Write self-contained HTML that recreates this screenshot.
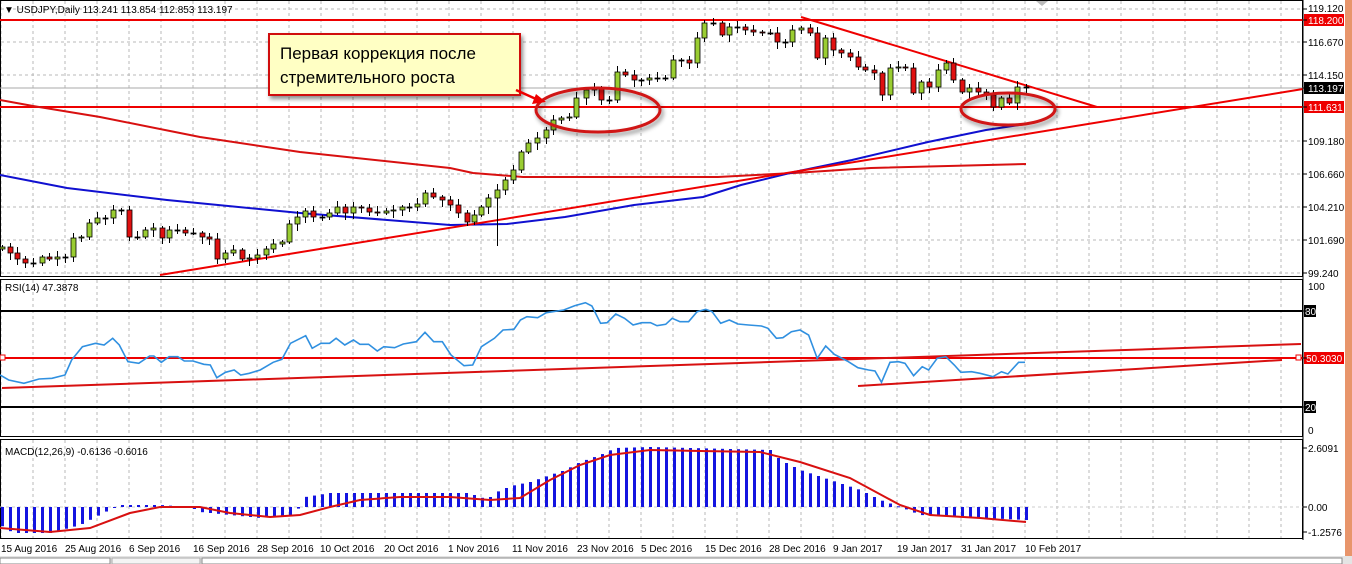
<!DOCTYPE html>
<html><head><meta charset="utf-8">
<style>
html,body{margin:0;padding:0;background:#fff;}
svg{display:block;font-family:"Liberation Sans",Arial,sans-serif;}
.ax{font-size:10px;fill:#000;}
</style></head>
<body>
<svg id="s" width="1352" height="564" viewBox="0 0 1352 564" xmlns="http://www.w3.org/2000/svg">
<defs>
<filter id="sh" x="-20%" y="-20%" width="150%" height="160%"><feDropShadow dx="2" dy="3" stdDeviation="2" flood-color="#000" flood-opacity="0.45"/></filter>
</defs>
<rect x="0" y="0" width="1352" height="564" fill="#fff"/>
<g id="grid" stroke="#b8b8b8" stroke-width="1" stroke-dasharray="3,3"></g>
<g stroke="#000" stroke-width="1" fill="none">
<rect x="0.5" y="0.5" width="1302" height="276"/>
<rect x="0.5" y="279.5" width="1302" height="157"/>
<rect x="0.5" y="439.5" width="1302" height="99"/>
</g>
<line x1="0" y1="88" x2="1303" y2="88" stroke="#aaa" stroke-width="1"/>
<line x1="0" y1="20" x2="1303" y2="20" stroke="#e00" stroke-width="2"/>
<line x1="0" y1="107" x2="1303" y2="107" stroke="#e00" stroke-width="2"/>
<polyline fill="none" stroke="#d81010" stroke-width="2" points="0,100 33,106 100,117 200,137 300,152 450,168 473,173 523,177 718,177 794,173 871,168 1026,164"/>
<polyline fill="none" stroke="#1010d0" stroke-width="2" points="0,175 67,188 167,200 300,213 450,225 507,224 565,217 634,205 703,197 741,185 794,172 852,160 928,142 986,130 1026,124"/>
<line x1="160" y1="275" x2="1303" y2="89" stroke="#e00" stroke-width="2"/>
<line x1="801" y1="17" x2="1097" y2="107" stroke="#e00" stroke-width="2"/>
<g id="candles"></g>
<ellipse cx="598" cy="110" rx="62" ry="22" fill="none" stroke="#d01818" stroke-width="3" filter="url(#sh)"/>
<ellipse cx="1008" cy="109" rx="47" ry="16" fill="none" stroke="#d01818" stroke-width="3" filter="url(#sh)"/>
<rect x="269" y="34" width="251" height="61" fill="#ffffc4" stroke="#d01010" stroke-width="2" filter="url(#sh)"/>
<text x="280" y="59" font-size="17" fill="#000">Первая коррекция после</text>
<text x="280" y="83" font-size="17" fill="#000">стремительного роста</text>
<line x1="516" y1="90" x2="536" y2="99" stroke="#e00" stroke-width="2.5"/>
<polygon points="546,102 532,104 536,94" fill="#e00"/>
<text x="4" y="13" font-size="10" fill="#000">▼ USDJPY,Daily  113.241 113.854 112.853 113.197</text>
<polygon points="1036,1 1048,1 1042,6" fill="#bbb"/>
<line x1="0" y1="311" x2="1303" y2="311" stroke="#000" stroke-width="2"/>
<line x1="0" y1="407" x2="1303" y2="407" stroke="#000" stroke-width="2"/>
<line x1="0" y1="358" x2="1303" y2="358" stroke="#e00" stroke-width="2"/>
<rect x="0" y="355" width="5" height="5" fill="#fff" stroke="#e00"/>
<rect x="1296" y="355" width="5" height="5" fill="#fff" stroke="#e00"/>
<line x1="2" y1="388" x2="1301" y2="344" stroke="#d81010" stroke-width="2"/>
<line x1="858" y1="386" x2="1282" y2="360" stroke="#d81010" stroke-width="2"/>
<polyline id="rsi" fill="none" stroke="#3090e0" stroke-width="1.6"/>
<text x="5" y="291" font-size="10">RSI(14) 47.3878</text>
<line x1="0" y1="507" x2="1303" y2="507" stroke="#ccc" stroke-width="1" stroke-dasharray="3,3"/>
<g id="hist" fill="#1414e0"></g>
<polyline fill="none" stroke="#d81010" stroke-width="2" points="0,528 50,532 90,528 130,513 160,507 200,507 230,513 270,517 300,515 330,507 360,500 400,497 450,497 490,500 520,498 550,480 580,465 610,455 650,450 700,451 760,452 800,462 850,478 900,505 930,515 980,518 1026,522"/>
<text x="5" y="455" font-size="10">MACD(12,26,9) -0.6136 -0.6016</text>
<rect x="1345" y="0" width="7" height="556" fill="#e8956b"/>
<g class="ax">
<text x="1308" y="12">119.120</text>
<rect x="1304" y="14" width="40" height="12" fill="#e00"/><text x="1308" y="24" fill="#fff">118.200</text>
<text x="1308" y="46">116.670</text>
<text x="1308" y="79">114.150</text>
<rect x="1304" y="82" width="40" height="12" fill="#000"/><text x="1308" y="92" fill="#fff">113.197</text>
<rect x="1304" y="101" width="40" height="12" fill="#e00"/><text x="1308" y="111" fill="#fff">111.631</text>
<text x="1308" y="145">109.180</text>
<text x="1308" y="178">106.660</text>
<text x="1308" y="211">104.210</text>
<text x="1308" y="244">101.690</text>
<text x="1308" y="277">99.240</text>
<text x="1308" y="290">100</text>
<rect x="1304" y="305" width="12" height="12" fill="#000"/><text x="1305" y="315" fill="#fff">80</text>
<rect x="1304" y="352" width="40" height="12" fill="#e00"/><text x="1306" y="362" fill="#fff">50.3030</text>
<rect x="1304" y="401" width="12" height="12" fill="#000"/><text x="1305" y="411" fill="#fff">20</text>
<text x="1308" y="434">0</text>
<text x="1308" y="452">2.6091</text>
<text x="1308" y="511">0.00</text>
<text x="1308" y="536">-1.2576</text>
</g>
<line x1="1303" y1="0" x2="1303" y2="540" stroke="#000"/>
<g id="ticks" stroke="#000"></g>
<g class="ax">
<text x="1" y="552">15 Aug 2016</text>
<text x="65" y="552">25 Aug 2016</text>
<text x="129" y="552">6 Sep 2016</text>
<text x="193" y="552">16 Sep 2016</text>
<text x="257" y="552">28 Sep 2016</text>
<text x="320" y="552">10 Oct 2016</text>
<text x="384" y="552">20 Oct 2016</text>
<text x="448" y="552">1 Nov 2016</text>
<text x="512" y="552">11 Nov 2016</text>
<text x="577" y="552">23 Nov 2016</text>
<text x="641" y="552">5 Dec 2016</text>
<text x="705" y="552">15 Dec 2016</text>
<text x="769" y="552">28 Dec 2016</text>
<text x="833" y="552">9 Jan 2017</text>
<text x="897" y="552">19 Jan 2017</text>
<text x="961" y="552">31 Jan 2017</text>
<text x="1025" y="552">10 Feb 2017</text>
</g>
<rect x="0" y="556" width="1352" height="8" fill="#e4e4e4"/>
<rect x="0" y="558" width="110" height="6" fill="#fff" stroke="#888"/>
<rect x="112" y="558" width="88" height="6" fill="#f4f4f4" stroke="#aaa"/>
<rect x="202" y="558" width="1140" height="6" fill="#fff" stroke="#888"/>
</svg>
<script>
(function(){
var NS="http://www.w3.org/2000/svg";
function el(p,n,a){var e=document.createElementNS(NS,n);for(var k in a)e.setAttribute(k,a[k]);p.appendChild(e);return e;}
var g=document.getElementById('grid');
for(var x=1;x<1303;x+=32){el(g,'line',{x1:x,y1:1,x2:x,y2:276});el(g,'line',{x1:x,y1:280,x2:x,y2:436});el(g,'line',{x1:x,y1:440,x2:x,y2:538});}
[9,42,75,141,174,207,240,273].forEach(function(y){el(g,'line',{x1:1,y1:y,x2:1302,y2:y});});
var tk=document.getElementById('ticks');
[9,20,42,75,88,107,141,174,207,240,273,311,358,407,448,507,532].forEach(function(y){el(tk,'line',{x1:1303,y1:y,x2:1307,y2:y});});
var C=[[2,247],[10,253],[17,259],[25,263],[33,263],[42,257],[49,259],[57,257],[65,257],[73,238],[81,237],[89,223],[97,218],[105,218],[113,210],[121,210],[129,237],[137,237],[145,230],[153,228],[162,238],[169,230],[177,230],[185,233],[193,233],[202,237],[209,239],[217,259],[225,253],[233,250],[242,259],[249,258],[257,255],[266,249],[273,244],[282,242],[289,224],[297,217],[305,211],[313,217],[322,217],[329,213],[337,207],[345,213],[353,207],[361,208],[369,212],[377,213],[386,211],[393,210],[402,207],[409,207],[417,204],[425,193],[433,197],[442,200],[450,205],[458,213],[467,222],[474,215],[481,207],[488,198],[497,190],[505,180],[513,170],[521,152],[528,143],[537,138],[546,130],[553,120],[561,118],[569,117],[576,98],[586,90],[594,88],[601,100],[609,100],[617,72],[625,75],[634,80],[641,80],[649,78],[657,78],[665,78],[673,60],[681,60],[689,63],[697,38],[704,23],[713,23],[722,35],[729,27],[737,27],[745,30],[753,32],[762,33],[770,33],[777,42],[785,42],[792,30],[801,28],[810,33],[817,58],[825,38],[833,50],[841,53],[850,57],[858,67],[865,70],[874,73],[882,95],[890,68],[898,67],[905,68],[913,93],[921,82],[929,87],[938,70],[946,63],[953,80],[962,92],[969,88],[978,92],[986,95],[993,107],[1001,98],[1009,103],[1017,87],[1026,87]];
var cg=document.getElementById('candles');
for(var i=0;i<C.length;i++){
 var x=C[i][0],c=C[i][1],o=i?C[i-1][1]:c+2;
 var ty=Math.min(o,c),by=Math.max(o,c);
 var hw=2+((i*7)%5),lw=2+((i*11)%6);
 if(x==497)lw=48;
 el(cg,'line',{x1:x+0.5,y1:ty-hw,x2:x+0.5,y2:by+lw,stroke:'#000','stroke-width':1});
 var h=Math.max(1,by-ty);
 el(cg,'rect',{x:x-2,y:ty,width:5,height:h,fill:(c<o?'#9acd32':(c>o?'#e01010':'#000')),stroke:'#000','stroke-width':0.8});
}
var R4=[[0,300],[20,315],[55,325],[90,312],[120,310],[150,300],[165,255],[190,215],[220,205],[240,210],[260,190],[275,210],[295,260],[320,265],[345,243],[355,243],[372,262],[390,245],[410,245],[425,258],[445,258],[470,268],[485,270],[500,308],[520,292],[540,285],[555,300],[575,295],[600,285],[630,262],[650,253],[670,205],[705,182],[720,220],[740,205],[760,205],[775,190],[795,210],[815,195],[830,208],[850,208],[870,228],[885,215],[910,218],[930,207],[960,200],[980,172],[1000,200],[1020,200],[1040,240],[1070,272],[1090,270],[1110,215],[1140,190],[1160,165],[1185,163],[1200,135],[1215,125],[1240,128],[1260,113],[1275,110],[1300,105],[1325,92],[1350,83],[1365,93],[1385,145],[1400,143],[1420,117],[1440,130],[1460,150],[1480,143],[1500,143],[1515,152],[1535,148],[1550,130]];
var R5=[[0,140],[20,140],[40,110],[60,103],[75,110],[95,145],[115,135],[135,147],[160,150],[190,153],[205,160],[225,190],[240,188],[260,170],[280,165],[300,180],[320,250],[340,213],[360,238],[390,258],[415,278],[440,285],[455,288],[470,322],[490,262],[510,260],[525,265],[545,302],[565,275],[580,285],[600,250],[620,245],[640,270],[655,292],[680,290],[700,295],[730,305],[750,290],[765,297],[790,262],[805,262]];
var pts=[];
R4.forEach(function(p){pts.push((p[0]/2.306).toFixed(1)+','+(275+p[1]/3).toFixed(1));});
R5.forEach(function(p){pts.push((680+p[0]/2.333).toFixed(1)+','+(275+p[1]/3).toFixed(1));});
document.getElementById('rsi').setAttribute('points',pts.join(' '));
var H=[[0,525],[13,533],[50,533],[80,525],[105,512],[116,507],[120,505],[160,505],[190,507],[200,512],[260,518],[290,515],[300,507],[305,497],[330,493],[470,493],[480,498],[490,497],[500,490],[515,485],[530,482],[550,475],[565,470],[580,462],[600,455],[615,448],[650,447],[770,450],[780,460],[800,470],[830,480],[860,490],[880,500],[900,507],[920,515],[1026,520]];
function hv(x){for(var j=1;j<H.length;j++){if(x<=H[j][0]){var a=H[j-1],b=H[j];return a[1]+(b[1]-a[1])*(x-a[0])/(b[0]-a[0]);}}return H[H.length-1][1];}
var hg=document.getElementById('hist');
for(var x2=2;x2<=1026;x2+=8){var y=hv(x2);var t=Math.min(y,507),hh=Math.abs(y-507);if(hh<1)hh=1;el(hg,'rect',{x:x2-1,y:t,width:3,height:hh});}
})();
</script>
</body></html>
